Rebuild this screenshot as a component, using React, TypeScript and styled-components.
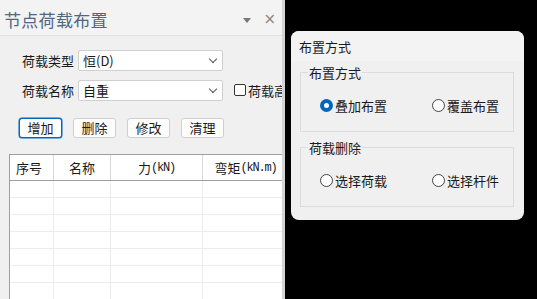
import React from 'react';
import styled, {createGlobalStyle} from "styled-components";

const GlobalStyle = createGlobalStyle`
    html, body {
        margin: 0;
        padding: 0;
        background: #000;
    }
    body {
        font-family: "Noto Sans CJK SC", "Noto Sans", sans-serif;
        font-size: 13px;
        color: #1a1a1a;
    }
`

const columns = [
    {name: '序号'},
    {name: '名称'},
    {name: '力', unit: '(kN)'},
    {name: '弯矩', unit: '(kN.m)'},
]
const rows = Array.from({length: 7})

export default function App() {
    return (
        <>
            <GlobalStyle/>
            <Screen>
                <Panel>
                    <TitleBar>
                        <Title>节点荷载布置</Title>
                        <TitleTools>
                            <Caret/>
                            <CloseX>×</CloseX>
                        </TitleTools>
                    </TitleBar>
                    <Form>
                        <FormRow>
                            <Label>荷载类型</Label>
                            <Select>
                                <span>恒(D)</span>
                                <Chevron/>
                            </Select>
                        </FormRow>
                        <FormRow>
                            <Label>荷载名称</Label>
                            <Select>
                                <span>自重</span>
                                <Chevron/>
                            </Select>
                            <CheckLabel>
                                <CheckBox/>
                                荷载高亮
                            </CheckLabel>
                        </FormRow>
                        <ButtonRow>
                            <Button $focused>增加</Button>
                            <Button>删除</Button>
                            <Button>修改</Button>
                            <Button>清理</Button>
                        </ButtonRow>
                    </Form>
                    <Table>
                        <HeaderRow>
                            {columns.map((c, i) => (
                                <HeadCell key={c.name} $left={i === 0}>
                                    {c.name}{c.unit && <Unit>{c.unit}</Unit>}
                                </HeadCell>
                            ))}
                        </HeaderRow>
                        {rows.map((_, r) => (
                            <BodyRow key={r}>
                                {columns.map(c => <BodyCell key={c.name}/>)}
                            </BodyRow>
                        ))}
                    </Table>
                </Panel>
                <Splitter/>
                <Canvas>
                    <Dialog>
                        <DialogTitle>布置方式</DialogTitle>
                        <DialogBody>
                            <Group>
                                <Legend>布置方式</Legend>
                                <RadioRow>
                                    <Radio><RadioDot $checked/>叠加布置</Radio>
                                    <Radio><RadioDot/>覆盖布置</Radio>
                                </RadioRow>
                            </Group>
                            <Group>
                                <Legend>荷载删除</Legend>
                                <RadioRow>
                                    <Radio><RadioDot/>选择荷载</Radio>
                                    <Radio><RadioDot/>选择杆件</Radio>
                                </RadioRow>
                            </Group>
                        </DialogBody>
                    </Dialog>
                </Canvas>
            </Screen>
        </>
    );
}

const Screen = styled.div`
    display: flex;
    width: 537px;
    height: 299px;
    overflow: hidden;
    background: #000;
`
const Panel = styled.div`
    width: 282px;
    flex-shrink: 0;
    display: flex;
    flex-direction: column;
    background: #f0f0f0;
    overflow: hidden;
`
const TitleBar = styled.div`
    height: 36px;
    flex-shrink: 0;
    box-sizing: border-box;
    display: flex;
    align-items: center;
    justify-content: space-between;
    padding: 3px 6px 0 4px;
    background: #f3f3f3;
    border-bottom: 1px solid #e2e2e2;
`
const Title = styled.div`
    font-size: 17px;
    color: #4f6781;
    letter-spacing: 0.3px;
`
const TitleTools = styled.div`
    display: flex;
    align-items: center;
    gap: 12px;
    color: #8a8a8a;
`
const Caret = styled.span`
    width: 0;
    height: 0;
    border-left: 4px solid transparent;
    border-right: 4px solid transparent;
    border-top: 5px solid #777;
    margin-top: 2px;
`
const CloseX = styled.span`
    font-family: "DejaVu Sans", sans-serif;
    font-size: 15px;
    color: #888;
`
const Form = styled.div`
    flex-shrink: 0;
    display: flex;
    flex-direction: column;
    padding: 14px 0 0 19px;
`
const FormRow = styled.div`
    display: flex;
    align-items: center;
    height: 20px;
    margin-bottom: 10px;
    & > * {
        flex-shrink: 0;
    }
`
const Label = styled.span`
    width: 59px;
    padding-left: 3px;
    box-sizing: border-box;
    white-space: nowrap;
`
const Select = styled.div`
    width: 145px;
    height: 21px;
    box-sizing: border-box;
    display: flex;
    align-items: center;
    justify-content: space-between;
    padding: 0 6px 0 4px;
    background: #fff;
    border: 1px solid #cfcfcf;
    border-radius: 2px;
`
const Chevron = styled.span`
    width: 5px;
    height: 5px;
    border-right: 1px solid #555;
    border-bottom: 1px solid #555;
    transform: rotate(45deg);
    margin-top: -3px;
`
const CheckLabel = styled.label`
    display: flex;
    align-items: center;
    gap: 2px;
    margin-left: 11px;
    white-space: nowrap;
`
const CheckBox = styled.span`
    width: 12px;
    height: 12px;
    box-sizing: border-box;
    border: 1px solid #333;
    border-radius: 2px;
    background: #fff;
`
const ButtonRow = styled.div`
    display: flex;
    gap: 11px;
    margin-top: 8px;
`
const Button = styled.button<{ $focused?: boolean }>`
    width: 43px;
    height: 20px;
    padding: 0;
    font: inherit;
    color: #1a1a1a;
    background: #fdfdfd;
    border: 1px solid ${p => p.$focused ? '#0067c0' : '#cfcfcf'};
    box-shadow: ${p => p.$focused ? '0 0 0 0.5px #0067c0' : 'none'};
    border-radius: 3px;
    line-height: 18px;
`
const Table = styled.div`
    margin: 16px 0 0 9px;
    flex: 1;
    min-height: 0;
    overflow: hidden;
    background: #fff;
    border-left: 1px solid #9e9e9e;
    border-top: 1px solid #9e9e9e;
`
const Grid = styled.div`
    display: grid;
    grid-template-columns: 44px 57px 92px 86px;
`
const HeaderRow = styled(Grid)`
    height: 25px;
    border-bottom: 1px solid #9e9e9e;
`
const HeadCell = styled.div<{ $left?: boolean }>`
    display: flex;
    align-items: center;
    justify-content: ${p => p.$left ? 'flex-start' : 'center'};
    padding-left: ${p => p.$left ? '6px' : '0'};
    border-right: 1px solid #d9d9d9;
    white-space: nowrap;
`
const Unit = styled.span`
    font-family: "Liberation Mono", monospace;
    font-size: 12px;
    letter-spacing: -1.2px;
`
const BodyRow = styled(Grid)`
    height: 16px;
    border-bottom: 1px solid #ececec;
`
const BodyCell = styled.div`
    border-right: 1px solid #ececec;
`
const Splitter = styled.div`
    width: 3px;
    flex-shrink: 0;
    background: #d4d4d4;
`
const Canvas = styled.div`
    flex: 1;
    padding: 31px 0 0 6px;
`
const Dialog = styled.div`
    width: 233px;
    height: 189px;
    box-sizing: border-box;
    background: #f0f0f0;
    border-radius: 8px;
    overflow: hidden;
`
const DialogTitle = styled.div`
    height: 30px;
    display: flex;
    align-items: center;
    padding-left: 8px;
    background: #f3f3f3;
`
const DialogBody = styled.div`
    display: flex;
    flex-direction: column;
    gap: 7px;
    padding: 3px 10px 0 9px;
`
const Group = styled.fieldset`
    margin: 0;
    padding: 0;
    height: 68px;
    box-sizing: border-box;
    border: 1px solid #dcdcdc;
`
const Legend = styled.legend`
    padding: 0 1px;
    margin-left: 7px;
    line-height: 17px;
`
const RadioRow = styled.div`
    display: grid;
    grid-template-columns: 112px auto;
    margin-top: 15px;
    padding-left: 19px;
`
const Radio = styled.label`
    display: flex;
    align-items: center;
    gap: 2px;
    white-space: nowrap;
`
const RadioDot = styled.span<{ $checked?: boolean }>`
    width: 13px;
    height: 13px;
    box-sizing: border-box;
    border-radius: 50%;
    border: ${p => p.$checked ? '4px solid #0067c0' : '1px solid #444'};
    background: #fff;
`
